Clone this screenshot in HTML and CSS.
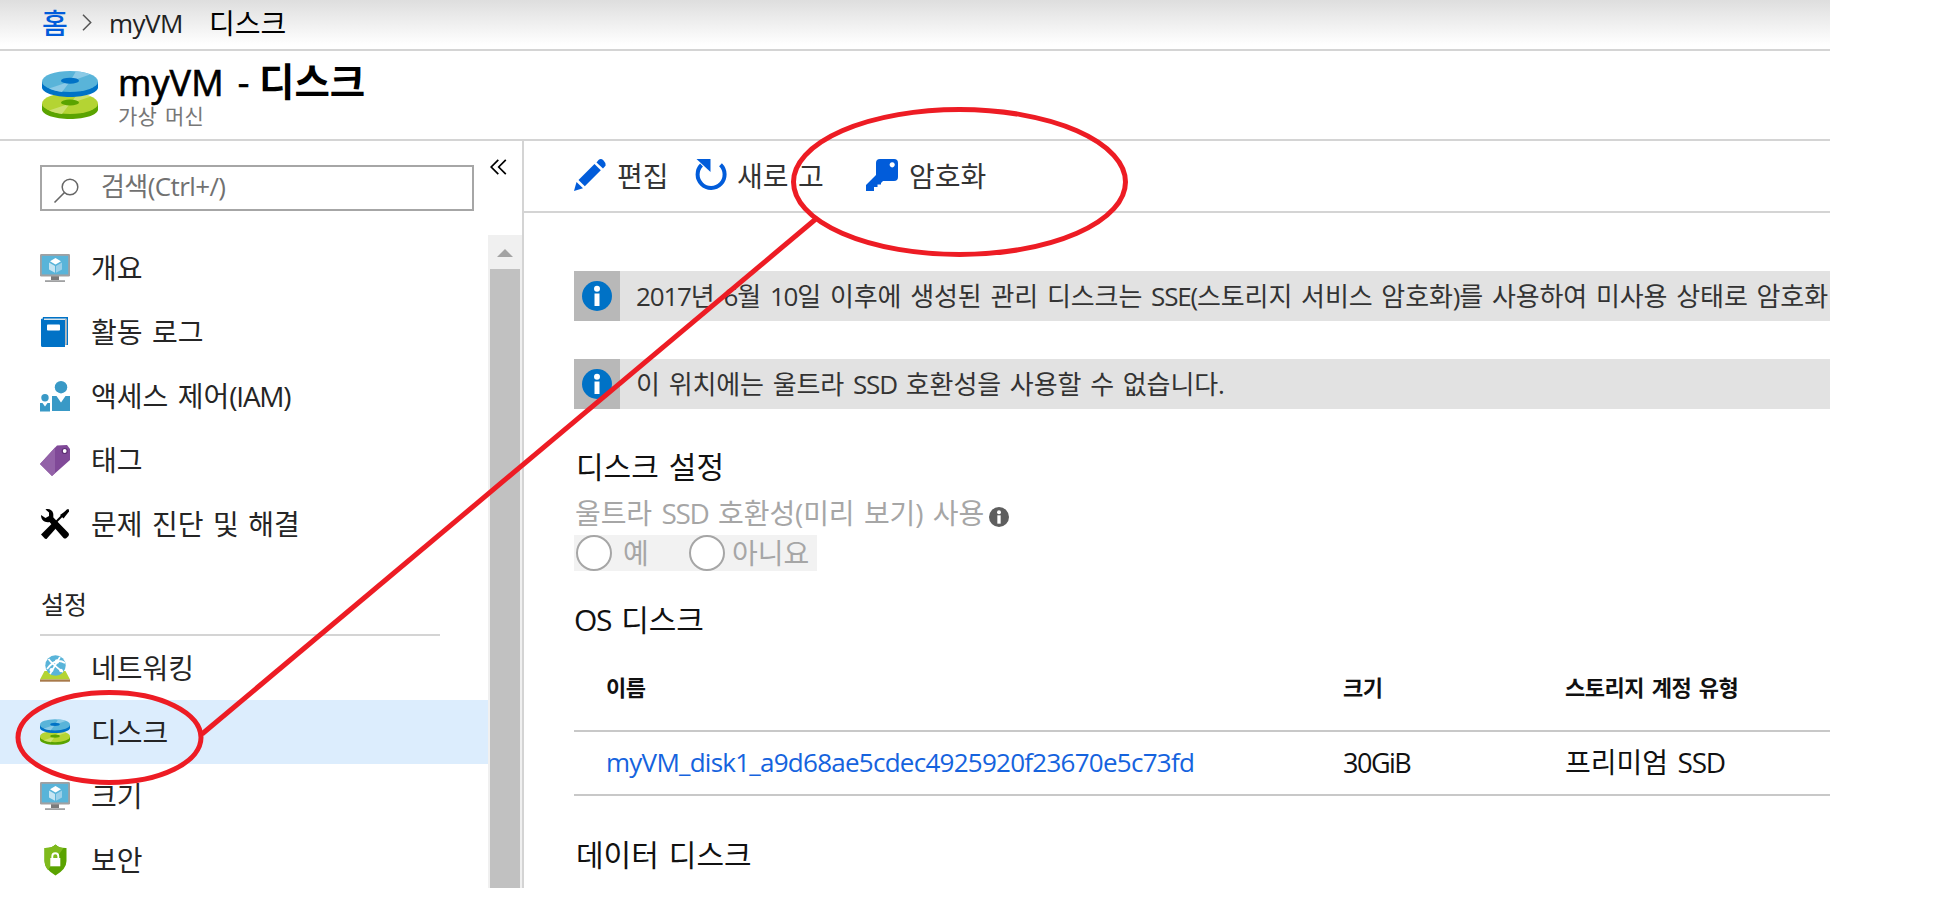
FILE: index.html
```html
<!DOCTYPE html>
<html lang="ko">
<head>
<meta charset="utf-8">
<title>myVM - 디스크</title>
<link rel="stylesheet" href="styles.css">
</head>
<body>
<svg class="defs" aria-hidden="true">
  <symbol id="disks" viewBox="0 0 56 48">
    <path d="M0 33v5.500c0 5 12.500 9.500 28 9.500s28-4.500 28-9.500V33z" fill="#5aa300"/>
    <ellipse cx="28" cy="32.500" rx="28" ry="10.500" fill="#b4d433"/>
    <path d="M28 32.500 7 39.500c4 2 9 3 13 3.400zM28 32.500 36 22.500c6 .5 10 1.500 13 3z" fill="#cce06e"/>
    <ellipse cx="28" cy="31.500" rx="9" ry="3" fill="#5aa300"/>
    <path d="M0 11v5.500C0 21.500 12.500 26 28 26s28-4.500 28-9.500V11z" fill="#0072c6"/>
    <ellipse cx="28" cy="10.500" rx="28" ry="10.500" fill="#59b4d9"/>
    <path d="M28 10.500 7 17.500c4 2 9 3 13 3.400zM28 10.500 34 .3c6 .5 10 1.500 14 3.200z" fill="#8bcae6"/>
    <ellipse cx="28" cy="9.700" rx="9" ry="3" fill="#0072c6"/>
  </symbol>
  <symbol id="monitor" viewBox="0 0 30 30">
    <path d="M11 23h8v4h-8z" fill="#7a7a7a"/>
    <path d="M5 27.200h20v1.800H5z" fill="#a0a1a2"/>
    <rect x="0" y="1" width="30" height="22.500" rx="1.200" fill="#a0a1a2"/>
    <rect x="1.800" y="2.800" width="26.400" height="18.600" fill="#59b4d9"/>
    <path d="m15.500 5 5.500 3.200-5.500 3.300L10 8.200z" fill="#fff"/>
    <path d="M9 9.500l6 3.500v6.800l-6-3.300z" fill="#c5e5f3"/>
    <path d="m22 9.500-6 3.500v6.800l6-3.300z" fill="#9bd0e9"/>
  </symbol>
  <symbol id="info" viewBox="0 0 30 30">
    <circle cx="15" cy="15" r="15" fill="currentColor"/>
    <circle cx="15" cy="7.700" r="3" fill="#fff"/>
    <path d="M12.500 12.500h5V25h-5z" fill="#fff"/>
  </symbol>
</svg>

<div class="portal">
  <nav class="crumbs">
    <a class="crumb-home">홈</a>
    <svg class="crumb-sep" viewBox="0 0 10 17"><path d="m1 .8 7.700 7.700L1 16.200" fill="none" stroke="#555" stroke-width="1.500"/></svg>
    <span class="crumb-vm">myVM</span>
    <span>디스크</span>
  </nav>

  <header class="blade-head">
    <svg class="blade-icon"><use href="#disks"/></svg>
    <div>
      <h1 class="title"><span class="title-latin">myVM -</span><b>디스크</b></h1>
      <p class="subtitle">가상 머신</p>
    </div>
  </header>

  <div class="body">
    <aside class="side">
      <div class="search-row">
        <div class="search">
          <svg class="search-icon" viewBox="0 0 26 26"><circle cx="17" cy="9" r="7.800" fill="none" stroke="#666" stroke-width="1.500"/><path d="M11.500 14.500 1.500 24.500" stroke="#666" stroke-width="1.600"/></svg>
          <span>검색(Ctrl+/)</span>
        </div>
        <svg class="collapse" viewBox="0 0 17 16"><path d="M8.300.8 1.200 8l7.100 7.200M15.800.8 8.700 8l7.100 7.200" fill="none" stroke="#000" stroke-width="1.700"/></svg>
      </div>
      <div class="menu-wrap">
        <div class="menu">
          <a class="item"><svg class="ico"><use href="#monitor"/></svg>개요</a>
          <a class="item"><svg class="ico" viewBox="0 0 30 30"><path d="M3 0h25v28h-3L2 3z" fill="#0072c6"/><path d="M4 1.500h22.500V27L4 3z" fill="#d8e4ec"/><path d="M25 2h1.600v26H25z" fill="#b8b8b8"/><path d="M1 1.500 3 3h22v27H2.500Q1 30 1 28.500z" fill="#0072c6"/><rect x="7" y="7.500" width="13" height="6" rx=".8" fill="#fff"/></svg>활동 로그</a>
          <a class="item"><svg class="ico" viewBox="0 0 30 30"><g fill="#3999c6"><circle cx="21" cy="6.200" r="6.200"/><path d="M12 15h4.500l4.500 6.500 4.500-6.500H30v15H12z"/><circle cx="5" cy="16.700" r="3.700"/><path d="M0 22h2.500L5 25.500 7.500 22H10v8.500H0z"/></g></svg>액세스 제어<span class="latin">(IAM)</span></a>
          <a class="item"><svg class="ico" viewBox="0 0 30 30"><path d="M17 .5 27 0l3 4v11L12 31 0 19z" fill="#804998"/><path d="M15 2.500V28l-3 3L0 19z" fill="#9362a8"/><circle cx="24.700" cy="6" r="2.500" fill="#fff" stroke="#5c2d73" stroke-width="1.200"/></svg>태그</a>
          <a class="item"><svg class="ico" viewBox="0 0 30 30"><path d="M28 .8 14.500 14.500" stroke="#000" stroke-width="2"/><path d="M28.800 0 29 2.500 23.500 9.500 20 6z"/><path d="M13 13.500 17.300 17.800 6.500 30 5 29.800 1 25.500z"/><path d="M5.500.4C9 -.7 12.500 1 13.200 4.500c.3 1.700 0 3 .2 3.900L28.500 24q1 1.500 0 3l-2 2q-1.500 1-3 0L9.500 13C5.500 13.800 1 12 1 6l4.500 3L9 7V3.500z"/></svg>문제 진단 및 해결</a>
          <h2 class="group"><span>설정</span></h2>
          <a class="item"><svg class="ico" viewBox="0 0 30 30"><path d="M4.500 18h21L30 26.500H0z" fill="#b4d433"/><path d="M0 26.500h30v2.200H0z" fill="#a8794a"/><circle cx="15.500" cy="12.500" r="10.200" fill="#59b4d9"/><path d="M8.500 6Q12 11 23 19M20 4 10 21M7 16q9-12 18-6" fill="none" stroke="#fff" stroke-width="1.700"/><g fill="#fff"><circle cx="17" cy="8.500" r="2.200"/><circle cx="11.500" cy="17" r="2"/><circle cx="21" cy="17.500" r="1.800"/></g></svg>네트워킹</a>
          <a class="item selected"><svg class="ico"><use href="#disks"/></svg>디스크</a>
          <a class="item"><svg class="ico"><use href="#monitor"/></svg>크기</a>
          <a class="item"><svg class="ico" viewBox="0 0 30 30"><path d="M15.500-.5Q19 3.200 26.500 3v13q0 8-11 14.500Q4.500 24 4.500 16V3Q12 3.200 15.500-.5z" fill="#5aa300"/><path d="M15.500-.5Q19 3.200 23.500 3L8 25Q4.500 21 4.500 16V3Q12 3.200 15.500-.5z" fill="#7fba1c"/><rect x="10.300" y="13" width="10" height="8.300" fill="#fff"/><path d="M12.300 13.500v-2.300q0-3 3-3t3 3v2.300" fill="none" stroke="#fff" stroke-width="1.900"/></svg>보안</a>
        </div>
        <div class="scroll"><svg class="scroll-up" viewBox="0 0 16 8"><path d="M0 8 8 0l8 8z" fill="#a3a3a3"/></svg><div class="thumb"></div></div>
      </div>
    </aside>

    <main class="main">
      <div class="toolbar">
        <a class="tool"><svg class="tool-ico" viewBox="0 0 32 32"><g fill="#015cda"><path d="M0 32 2.500 23 9 29.200z"/><path d="M4.500 21 20.500 5l6.300 6.300L10.800 27.300z"/><path d="m22.500 3.500 2-2.500q2.500-2 5 .5t2 5.200L29 9.500z"/></g></svg>편집</a>
        <a class="tool"><svg class="tool-ico" viewBox="0 0 32 32"><path d="M25.500 5.800A13.500 13.500 0 1 1 6.500 6" fill="none" stroke="#015cda" stroke-width="4"/><path d="M1.500 0h14v13z" fill="#015cda"/></svg>새로 고</a>
        <a class="tool"><svg class="tool-ico" viewBox="0 0 32 32"><path fill-rule="evenodd" fill="#015cda" d="M14 0h14q4 0 4 4v14q0 4-4 4H17l-2 2v1.500h-3.500V28H8v4H0v-6l10-10V4q0-4 4-4zM26.200 3.200a2.600 2.600 0 1 0 .01 0z"/></svg>암호화</a>
      </div>

      <div class="content">
        <div class="notice"><div class="notice-mark"><svg><use href="#info"/></svg></div><p><span class="latin">2017</span>년 <span class="latin">6</span>월 <span class="latin">10</span>일 이후에 생성된 관리 디스크는 <span class="latin">SSE(</span>스토리지 서비스 암호화<span class="latin">)</span>를 사용하여 미사용 상태로 암호화</p></div>
        <div class="notice"><div class="notice-mark"><svg><use href="#info"/></svg></div><p>이 위치에는 울트라 <span class="latin">SSD</span> 호환성을 사용할 수 없습니다.</p></div>

        <h3 class="section first">디스크 설정</h3>
        <div class="label">울트라 <span class="latin">SSD</span> 호환성(미리 보기) 사용<svg><use href="#info"/></svg></div>
        <div class="radios">
          <span class="radio"><i></i>예</span>
          <span class="radio no"><i></i>아니요</span>
        </div>

        <h3 class="section os"><span class="latin">OS</span> 디스크</h3>
        <div class="grid head"><span>이름</span><span>크기</span><span>스토리지 계정 유형</span></div>
        <div class="grid row"><a class="link">myVM_disk1_a9d68ae5cdec4925920f23670e5c73fd</a><span class="size">30GiB</span><span>프리미엄 <span class="latin">SSD</span></span></div>
        <h3 class="section data">데이터 디스크</h3>
      </div>
    </main>
  </div>

  <svg class="marks" viewBox="0 0 1830 888" fill="none" stroke="#ed1c24" stroke-width="5">
    <ellipse cx="959.500" cy="182" rx="166" ry="72.500"/>
    <ellipse cx="109.500" cy="737.500" rx="91.500" ry="45"/>
    <path d="M817 218 202 734"/>
  </svg>
</div>
</body>
</html>
```
FILE: styles.css
```css
* { box-sizing: border-box; margin: 0; padding: 0; }

body {
  background: #fff;
  color: #111;
  font-family: "Open Sans", "Noto Sans CJK KR", sans-serif;
  font-size: 28px;
  line-height: 40px;
  word-spacing: .08em;
  white-space: nowrap;
}

svg { display: block; flex: none; }
.defs { position: absolute; width: 0; height: 0; }
.latin { letter-spacing: -.045em; }

.portal {
  position: relative;
  display: flex;
  flex-direction: column;
  width: 1830px;
  height: 888px;
  overflow: hidden;
}

.crumbs {
  display: flex;
  flex: none;
  align-items: center;
  height: 51px;
  padding: 0 0 4px 42px;
  border-bottom: 2px solid #d4d4d4;
  background: linear-gradient(#dedede, #fff 45px);
  color: #000;
}
.crumb-home { width: 40px; color: #015cda; font-weight: 500; }
.crumb-sep { width: 10px; height: 17px; margin-right: 17px; }
.crumb-vm { width: 100px; color: #222; font-size: 26px; letter-spacing: -.5px; padding-top: 1px; }

.blade-head {
  display: flex;
  flex: none;
  height: 90px;
  padding-left: 42px;
  border-bottom: 2px solid #d4d4d4;
}
.blade-icon { width: 56px; height: 48px; margin: 20px 20px 0 0; }
.title { display: flex; height: 50px; padding-top: 5px; color: #000; font-size: 38.500px; font-weight: 500; line-height: 50px; }
.title-latin {
  width: 141px;
  padding-top: 2px;
  font-size: 36px;
  letter-spacing: .1px;
  word-spacing: .13em;
  -webkit-text-stroke: .7px #000;
}
.title b { font-weight: 700; }
.subtitle { margin-top: -1px; color: #777; font-size: 21px; letter-spacing: .2px; line-height: 32px; }

.body { display: flex; flex: 1; min-height: 0; }

.side {
  display: flex;
  flex: none;
  flex-direction: column;
  width: 524px;
  border-right: 2px solid #d4d4d4;
}
.search-row { display: flex; flex: none; height: 94px; padding: 24px 0 0 40px; }
.search {
  display: flex;
  width: 434px;
  height: 46px;
  padding-left: 11px;
  border: 2px solid #a6a6a6;
  color: #717171;
  font-size: 26px;
  letter-spacing: -.6px;
  line-height: 38px;
}
.search-icon { width: 26px; height: 26px; margin: 11px 22px 0 0; }
.collapse { width: 17px; height: 16px; margin: -6px 0 0 16px; }

.menu-wrap { display: flex; flex: 1; min-height: 0; }
.menu { width: 488px; padding-top: 1px; overflow: hidden; color: #252525; }
.item { display: flex; align-items: center; height: 64px; padding-left: 40px; }
.item.selected { background: #dcedfd; }
.ico { width: 30px; height: 30px; margin: -1px 21px 0 0; overflow: visible; }
.group {
  width: 400px;
  height: 80px;
  margin-left: 40px;
  padding: 28px 0 0 1px;
  border-bottom: 2px solid #d4d4d4;
  font-size: 25px;
  font-weight: 400;
}

.scroll { width: 34px; padding: 14px 2px 0; background: #f0f0f0; }
.scroll-up { width: 16px; height: 8px; margin: 0 auto 12px; }
.thumb { height: 619px; background: #c1c1c1; }

.main { flex: 1; min-width: 0; }
.toolbar {
  display: grid;
  grid-template-columns: 121px 171px auto;
  align-items: center;
  height: 72px;
  padding-left: 50px;
  border-bottom: 2px solid #d4d4d4;
  color: #333;
}
.tool { display: flex; align-items: center; gap: 11px; }
.tool:nth-child(2) { gap: 10px; }
.tool-ico { width: 32px; height: 32px; margin-top: -2px; }

.content { padding: 58px 0 0 50px; }
.notice {
  display: flex;
  height: 50px;
  margin-bottom: 38px;
  overflow: hidden;
  background: #e2e2e2;
  color: #333;
  font-size: 26px;
  letter-spacing: -.12px;
  line-height: 50px;
}
.notice-mark { flex: none; width: 46px; padding: 10px 8px; margin-right: 16px; background: #b8b8b8; color: #0072c6; }
.notice-mark svg { width: 30px; height: 30px; }

.section { font-size: 30px; font-weight: 400; line-height: 40px; }
.section.first { padding-left: 2px; line-height: 39px; height: 40px; }
.label { display: flex; height: 48px; padding: 6px 0 0 1px; color: #a6a6a6; letter-spacing: -.1px; white-space: pre; }
.label svg { width: 20px; height: 20px; margin: 14px 0 0 5px; color: #5e5e5e; }
.radios { display: flex; width: 243px; height: 36px; padding-left: 2px; background: #f2f2f2; color: #a6a6a6; line-height: 36px; }
.radio { display: flex; gap: 11px; width: 113px; }
.radio.no { gap: 7px; }
.radio i { flex: none; width: 36px; height: 36px; border: 2px solid #a6a6a6; border-radius: 50%; background: #fff; }
.section.os { padding-top: 29px; }

.grid {
  display: grid;
  grid-template-columns: 737px 222px auto;
  padding-left: 32px;
  border-bottom: 2px solid #c8c8c8;
}
.head { height: 92px; padding-top: 27px; font-size: 22px; font-weight: 700; letter-spacing: -.45px; }
.row { height: 64px; line-height: 61px; }
.link { color: #1563de; font-size: 26px; letter-spacing: -.74px; }
.size { font-size: 27px; letter-spacing: -1.5px; }
.section.data { padding: 39px 0 0 2px; }

.marks { position: absolute; inset: 0; width: 1830px; height: 888px; }
```
